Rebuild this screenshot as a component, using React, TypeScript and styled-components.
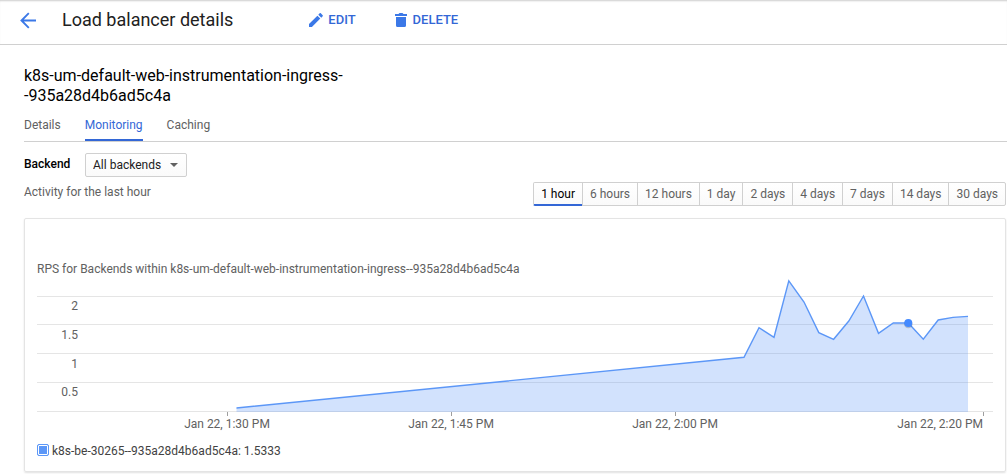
import React, { useState } from "react";
import styled, { createGlobalStyle } from "styled-components";

const GlobalStyle = createGlobalStyle`
  * { box-sizing: border-box; }
  body {
    margin: 0;
    background: #fff;
    color: #616161;
    font-family: Roboto, "Liberation Sans", sans-serif;
    font-size: 12px;
    line-height: 16px;
  }
`;

const Header = styled.header`
  display: flex;
  align-items: center;
  height: 45px;
  padding: 0 20px 4px;
  border-bottom: 1px solid #d0d0d0;
  box-shadow: inset 0 2px 2px -1px rgba(0, 0, 0, 0.2);
`;

const BackLink = styled.a`
  display: flex;
  width: 42px;
  color: #3b78e7;
`;

const PageTitle = styled.h1`
  margin: 0 75px 0 0;
  color: #212121;
  font-size: 18px;
  font-weight: 400;
  line-height: 24px;
`;

const Actions = styled.div`
  display: flex;
  gap: 38px;
`;

const ActionButton = styled.button`
  display: flex;
  align-items: center;
  gap: 4px;
  padding: 0;
  border: 0;
  background: none;
  color: #3367d6;
  font: 500 13px/16px Roboto, "Liberation Sans", sans-serif;
  cursor: pointer;

  svg { color: #3b78e7; }
`;

const Main = styled.main`
  padding: 21px 0 0 24px;
`;

const ResourceName = styled.h2`
  max-width: 328px;
  margin: 0;
  color: #000;
  font-size: 16px;
  font-weight: 400;
  line-height: 20px;
`;

const Tabs = styled.nav`
  display: flex;
  gap: 24px;
  margin-top: 11px;
  border-bottom: 1px solid #d0d0d0;
`;

const Tab = styled.a<{ $active?: boolean }>`
  height: 24px;
  border-bottom: 2px solid ${(p) => (p.$active ? "#3367d6" : "transparent")};
  color: ${(p) => (p.$active ? "#3367d6" : "#616161")};
  text-decoration: none;
`;

const FilterRow = styled.div`
  display: flex;
  align-items: center;
  padding-top: 11px;
`;

const FilterLabel = styled.label`
  width: 61px;
  padding-bottom: 2px;
  color: #000;
  font-weight: 500;
`;

const SelectBox = styled.div`
  display: grid;
  align-items: center;

  > * { grid-area: 1 / 1; }
  svg { justify-self: end; margin-right: 9px; pointer-events: none; }
`;

const Select = styled.select`
  appearance: none;
  height: 24px;
  padding: 0 24px 0 7px;
  border: 1px solid #d0d0d0;
  border-radius: 2px;
  background: linear-gradient(#fff, #fafafa);
  color: #212121;
  font: 400 12px/16px Roboto, "Liberation Sans", sans-serif;
`;

const ActivityRow = styled.div`
  display: flex;
  justify-content: space-between;
  align-items: flex-start;
  padding: 5px 1px 0 0;
`;

const ActivityText = styled.p`
  margin: 2px 0 0;
`;

const RangeGroup = styled.div`
  display: flex;
`;

const RangeButton = styled.button<{ $active: boolean }>`
  height: 24px;
  margin-left: -1px;
  padding: ${(p) => (p.$active ? "0 7px" : "0 7px 1px")};
  border: 1px solid #d0d0d0;
  border-bottom: ${(p) => (p.$active ? "2px solid #3367d6" : "1px solid #d0d0d0")};
  background: linear-gradient(#fff, #fafafa);
  color: ${(p) => (p.$active ? "#000" : "#616161")};
  font: 400 12px/16px Roboto, "Liberation Sans", sans-serif;
  white-space: nowrap;
  cursor: pointer;

  &:first-child { border-radius: 2px 0 0 2px; }
  &:last-child { border-radius: 0 2px 2px 0; }
`;

const Card = styled.section`
  margin: 12px 1px 2px 0;
  padding: 42px 12px;
  padding-bottom: 12px;
  border: 1px solid #e4e4e4;
  border-radius: 2px;
  box-shadow: 0 1px 2px rgba(0, 0, 0, 0.12);
`;

const ChartTitle = styled.h3`
  margin: 0 0 1px;
  font-size: 12px;
  font-weight: 400;
  line-height: 16px;
`;

const ChartSvg = styled.svg`
  display: block;
  width: 100%;
  height: auto;

  text { fill: #616161; font-size: 12px; }
`;

const Legend = styled.label`
  display: flex;
  align-items: center;
  gap: 3px;
  margin-top: 10px;
  color: #424242;
`;

const LegendCheck = styled.input`
  appearance: none;
  width: 12px;
  height: 12px;
  margin: 0 0 3px;
  border: 1px solid #5c97f7;
  border-radius: 2px;
  background: #fff;

  &:checked {
    box-shadow: inset 0 0 0 1px #fff;
    background: #5c97f7;
  }
`;

const ranges = ["1 hour", "6 hours", "12 hours", "1 day", "2 days", "4 days", "7 days", "14 days", "30 days"];

const gridLines = [18, 46, 75, 104, 133];
const yLabels = [
  { text: "2", y: 32 },
  { text: "1.5", y: 61 },
  { text: "1", y: 90 },
  { text: "0.5", y: 118 },
];
const xTicks = [
  { text: "Jan 22, 1:30 PM", x: 190 },
  { text: "Jan 22, 1:45 PM", x: 414 },
  { text: "Jan 22, 2:00 PM", x: 638 },
  { text: "Jan 22, 2:20 PM", x: 946, end: true },
];
const points: [number, number][] = [
  [199.5, 130], [707, 79.3], [722, 49.7], [737, 59.3], [751.8, 2.8],
  [767, 24], [781.8, 54.6], [796.6, 61.3], [811.8, 43], [826.5, 18],
  [841.5, 55.3], [856.3, 45], [871.3, 45], [886.3, 61.2], [901.2, 42],
  [916, 39.4], [931, 38.4],
];

function Chart() {
  const line = points.map((p) => p.join(",")).join(" ");
  return (
    <ChartSvg viewBox="0 0 956 155" role="img" aria-label="Requests per second over the last hour">
      {gridLines.map((y) => (
        <rect key={y} x="0" y={y} width="956" height="1" fill="#e5e5e5" />
      ))}
      <polygon points={`199.5,134 ${line} 931,134`} fill="#5c97f7" fillOpacity="0.28" />
      <polyline points={line} fill="none" stroke="#5c97f7" strokeWidth="1.4" />
      <circle cx="871.3" cy="46" r="4.3" fill="#000" opacity="0.18" />
      <circle cx="871.3" cy="45" r="4" fill="#448aff" />
      {yLabels.map((l) => (
        <text key={l.text} x="41" y={l.y} textAnchor="end">{l.text}</text>
      ))}
      {xTicks.map((t) => (
        <g key={t.text}>
          <rect x={t.x} y="134" width="1" height="4" fill="#9e9e9e" />
          <text x={t.x} y="150" textAnchor={t.end ? "end" : "middle"}>{t.text}</text>
        </g>
      ))}
    </ChartSvg>
  );
}

export default function App() {
  const [range, setRange] = useState("1 hour");
  return (
    <>
      <GlobalStyle />
      <Header>
        <BackLink href="#" aria-label="Back">
          <svg width="17" height="17" viewBox="0 0 17 17" fill="none" stroke="currentColor" strokeWidth="1.9">
            <path d="M16 8.5H1.8M8.8 1.2L1.5 8.500l7.300 7.300" />
          </svg>
        </BackLink>
        <PageTitle>Load balancer details</PageTitle>
        <Actions>
          <ActionButton type="button">
            <svg width="16" height="16" viewBox="0 0 16 16" fill="currentColor">
              <path d="M1 12.1V15h2.9l8.4-8.4-2.9-2.9L1 12.1zM14.7 4.3c.3-.3.3-.8 0-1.1l-1.9-1.9c-.3-.3-.8-.3-1.1 0l-1.4 1.4 3 3 1.4-1.4z" />
            </svg>
            EDIT
          </ActionButton>
          <ActionButton type="button">
            <svg width="15" height="16" viewBox="0 0 15 16" fill="currentColor">
              <path d="M2 5h10v8.5a1.5 1.5 0 0 1-1.5 1.5h-7A1.5 1.5 0 0 1 2 13.5V5zM13 2v2H1V2h3.500l1-1h3l1 1H13z" />
            </svg>
            DELETE
          </ActionButton>
        </Actions>
      </Header>
      <Main>
        <ResourceName>
          k8s-um-default-web-instrumentation-ingress-<wbr />-935a28d4b6ad5c4a
        </ResourceName>
        <Tabs>
          <Tab href="#details">Details</Tab>
          <Tab href="#monitoring" $active aria-current="page">Monitoring</Tab>
          <Tab href="#caching">Caching</Tab>
        </Tabs>
        <FilterRow>
          <FilterLabel htmlFor="backend">Backend</FilterLabel>
          <SelectBox>
            <Select id="backend">
              <option>All backends</option>
            </Select>
            <svg width="8" height="4" viewBox="0 0 8 4" fill="#616161" aria-hidden="true">
              <path d="M0 0h8L4 4z" />
            </svg>
          </SelectBox>
        </FilterRow>
        <ActivityRow>
          <ActivityText>Activity for the last hour</ActivityText>
          <RangeGroup role="group" aria-label="Time range">
            {ranges.map((r) => (
              <RangeButton key={r} type="button" $active={r === range} aria-pressed={r === range} onClick={() => setRange(r)}>
                {r}
              </RangeButton>
            ))}
          </RangeGroup>
        </ActivityRow>
        <Card>
          <ChartTitle>RPS for Backends within k8s-um-default-web-instrumentation-ingress--935a28d4b6ad5c4a</ChartTitle>
          <Chart />
          <Legend>
            <LegendCheck type="checkbox" defaultChecked />
            k8s-be-30265--935a28d4b6ad5c4a: 1.5333
          </Legend>
        </Card>
      </Main>
    </>
  );
}
